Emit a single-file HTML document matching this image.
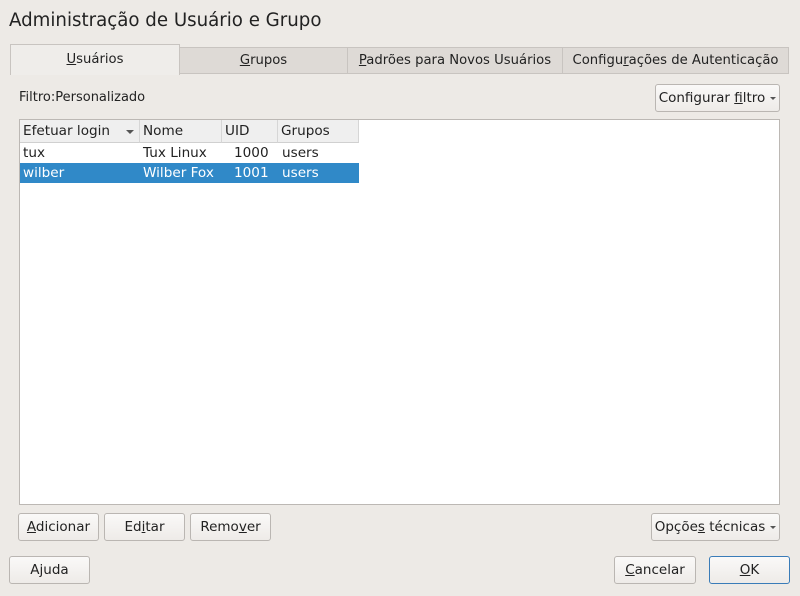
<!DOCTYPE html><html><head><style>
*{margin:0;padding:0;box-sizing:border-box}
body{width:800px;height:596px;background:#edeae6;font-family:"DejaVu Sans","Liberation Sans",sans-serif;font-size:13px;color:#222;position:relative;overflow:hidden}
.a{position:absolute;white-space:nowrap}
.tab{position:absolute;top:47px;height:27px;background:#dedad6;border:1px solid #c8c4c0;text-align:center;line-height:26px;font-size:13.2px}
.btn{position:absolute;height:28px;background:linear-gradient(#faf9f8,#eeebe8);border:1px solid #bab6b2;border-radius:3px;text-align:center;line-height:26px;font-size:13.5px}
u{text-decoration:underline}
.arr{display:inline-block;width:0;height:0;border-left:3px solid transparent;border-right:3px solid transparent;border-top:3px solid #555;vertical-align:middle;margin-left:5px}
.hd{position:absolute;top:120px;height:23px;background:#efefef;border-right:1px solid #d6d6d6;border-bottom:1px solid #d0d0d0;line-height:22px;padding-left:3px;font-size:13.6px}
.c{position:absolute;font-size:13.6px;line-height:20px}
</style></head><body>
<div class="a" style="left:9px;top:10px;font-size:18.2px;color:#222">Administração de Usuário e Grupo</div>
<div class="tab" style="left:179px;width:169px"><u>G</u>rupos</div>
<div class="tab" style="left:347px;width:216px"><u>P</u>adrões para Novos Usuários</div>
<div class="tab" style="left:562px;width:227px">Configu<u>r</u>ações de Autenticação</div>
<div class="tab" style="left:10px;top:44px;height:31px;width:170px;background:#efedea;border-bottom:none;line-height:30px"><u>U</u>suários</div>
<div class="a" style="left:19px;top:90px">Filtro:Personalizado</div>
<div class="btn" style="left:655px;top:84px;width:125px">Configurar <u>f</u>iltro<span class="arr"></span></div>
<div class="a" style="left:19px;top:119px;width:761px;height:386px;background:#fff;border:1px solid #bcb8b4"></div>
<div class="hd" style="left:20px;width:120px">Efetuar login<span style="position:absolute;left:106px;top:10px;border-left:4px solid transparent;border-right:4px solid transparent;border-top:4px solid #555"></span></div>
<div class="hd" style="left:140px;width:82px">Nome</div>
<div class="hd" style="left:222px;width:56px">UID</div>
<div class="hd" style="left:278px;width:81px">Grupos</div>
<div class="a" style="left:20px;top:163px;width:339px;height:20px;background:#3089c8"></div>
<div class="c" style="left:23px;top:143px">tux</div><div class="c" style="left:143px;top:143px">Tux Linux</div><div class="c" style="left:234px;top:143px">1000</div><div class="c" style="left:282px;top:143px">users</div>
<div class="c" style="left:23px;top:163px;color:#fff">wilber</div><div class="c" style="left:143px;top:163px;color:#fff">Wilber Fox</div><div class="c" style="left:234px;top:163px;color:#fff">1001</div><div class="c" style="left:282px;top:163px;color:#fff">users</div>
<div class="btn" style="left:18px;top:513px;width:81px"><u>A</u>dicionar</div>
<div class="btn" style="left:104px;top:513px;width:81px">Ed<u>i</u>tar</div>
<div class="btn" style="left:190px;top:513px;width:81px">Remo<u>v</u>er</div>
<div class="btn" style="left:651px;top:513px;width:129px">Opçõe<u>s</u> técnicas<span class="arr"></span></div>
<div class="btn" style="left:9px;top:556px;width:81px">A<u>j</u>uda</div>
<div class="btn" style="left:614px;top:556px;width:82px"><u>C</u>ancelar</div>
<div class="btn" style="left:709px;top:556px;width:81px;border-color:#3a7cb8"><u>O</u>K</div>
</body></html>
